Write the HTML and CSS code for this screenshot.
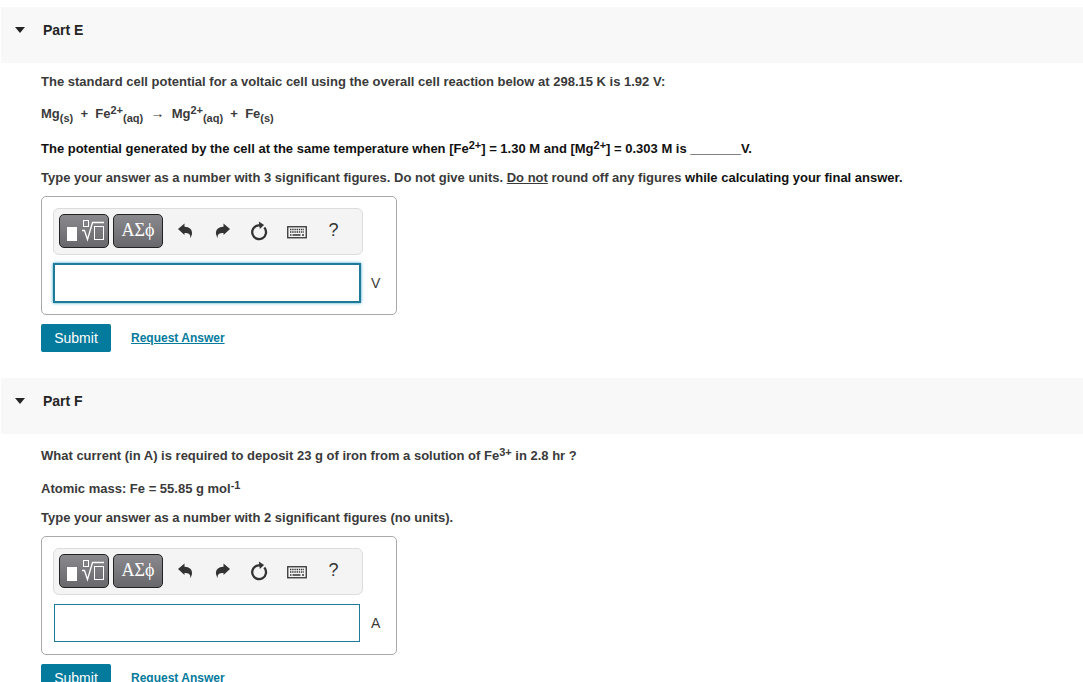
FILE: index.html
```html
<!DOCTYPE html>
<html lang="en">
  <head>
    <meta charset="UTF-8" />
    <meta name="viewport" content="width=device-width, initial-scale=1.0" />
    <title>Voltaic Cells</title>
    <link rel="stylesheet" href="styles.css">
  </head>
  <body>
    <!-- shared toolbar icons -->
    <svg class="sprite" aria-hidden="true">
      <symbol id="icon-template" viewBox="0 0 40 24">
        <rect x="3" y="8" width="10" height="14" fill="#fff" />
        <g fill="none" stroke="#fff">
          <rect x="19.500" y="1.500" width="5" height="6" />
          <path d="M18 11.500h2.500l3 9 5-17H40" stroke-width="1.300" />
          <rect x="30.500" y="7.500" width="9" height="13" />
        </g>
      </symbol>
      <symbol id="icon-undo" viewBox="0 0 16 16">
        <path d="M0 6 6.500 0.500v3.300c5 0 8 3 7.500 7.200l-1.500 4.500c.2-4.500-2-5.500-6-5.500v2z" />
      </symbol>
      <symbol id="icon-redo" viewBox="0 0 16 16">
        <path d="M15 6 8.500 0.500v3.300c-5 0-8 3-7.500 7.200l1.500 4.500c-.2-4.500 2-5.500 6-5.500v2z" />
      </symbol>
      <symbol id="icon-reset" viewBox="0 0 18 20">
        <path d="M13.300 6.600A6.900 6.900 0 1 1 7.500 4.300h2" fill="none" stroke="#333" stroke-width="2.300" />
        <path d="M7.800 0.500 13.100 4 8.800 8z" />
      </symbol>
      <symbol id="icon-keyboard" viewBox="0 0 20 13">
        <rect x="0.750" y="0.750" width="18.500" height="11" fill="none" stroke="#333" stroke-width="1.300" />
        <path d="M3 3.500h14M3 6h14" stroke="#333" stroke-width="1.500" stroke-dasharray="1.400 0.800" />
        <path d="M3 9h1.500M5.500 9h8M15 9h2" stroke="#333" stroke-width="1.500" />
      </symbol>
    </svg>

    <section class="part">
      <button type="button" class="part-header">
        <span class="caret"></span>
        Part E
      </button>
      <div class="part-body">
        <p>The standard cell potential for a voltaic cell using the overall cell reaction below at 298.15 K is 1.92 V:</p>
        <p class="has-sup has-sub">Mg<sub>(s)</sub>&nbsp; + &nbsp;Fe<sup>2+</sup><sub>(aq)</sub>&nbsp; <span class="arrow">→</span>&nbsp; Mg<sup>2+</sup><sub>(aq)</sub>&nbsp; + &nbsp;Fe<sub>(s)</sub></p>
        <p class="has-sup dark">The potential generated by the cell at the same temperature when [Fe<sup>2+</sup>] = 1.30 M and [Mg<sup>2+</sup>] = 0.303 M is _______V.</p>
        <p>Type your answer as a number with 3 significant figures. Do not give units. <u>Do not</u> round off any figures <span class="dark">while calculating your final answer.</span></p>
        <form id="formE">
          <div class="answer-box">
            <div class="toolbar">
              <button type="button" class="tool-dark" aria-label="Templates"><svg width="40" height="24"><use href="#icon-template" /></svg></button>
              <button type="button" class="tool-dark">ΑΣϕ</button>
              <button type="button" class="tool" aria-label="Undo"><svg width="16" height="16"><use href="#icon-undo" /></svg></button>
              <button type="button" class="tool" aria-label="Redo"><svg width="16" height="16"><use href="#icon-redo" /></svg></button>
              <button type="button" class="tool" aria-label="Reset"><svg width="18" height="20"><use href="#icon-reset" /></svg></button>
              <button type="button" class="tool" aria-label="Keyboard shortcuts"><svg class="keyboard" width="20" height="13"><use href="#icon-keyboard" /></svg></button>
              <button type="button" class="tool" title="Help">?</button>
            </div>
            <div class="answer-row">
              <input type="text" id="answerE" class="answer active" />
              <label for="answerE">V</label>
            </div>
          </div>
          <div class="actions">
            <button type="button" class="btn">Submit</button>
            <a href="#answerE">Request Answer</a>
          </div>
        </form>
      </div>
    </section>

    <section class="part">
      <button type="button" class="part-header">
        <span class="caret"></span>
        Part F
      </button>
      <div class="part-body">
        <p class="has-sup">What current (in A) is required to deposit 23 g of iron from a solution of Fe<sup>3+</sup> in 2.8 hr ?</p>
        <p class="has-sup">Atomic mass: Fe = 55.85 g mol<sup>-1</sup></p>
        <p>Type your answer as a number with 2 significant figures (no units).</p>
        <form id="formF">
          <div class="answer-box">
            <div class="toolbar">
              <button type="button" class="tool-dark" aria-label="Templates"><svg width="40" height="24"><use href="#icon-template" /></svg></button>
              <button type="button" class="tool-dark">ΑΣϕ</button>
              <button type="button" class="tool" aria-label="Undo"><svg width="16" height="16"><use href="#icon-undo" /></svg></button>
              <button type="button" class="tool" aria-label="Redo"><svg width="16" height="16"><use href="#icon-redo" /></svg></button>
              <button type="button" class="tool" aria-label="Reset"><svg width="18" height="20"><use href="#icon-reset" /></svg></button>
              <button type="button" class="tool" aria-label="Keyboard shortcuts"><svg class="keyboard" width="20" height="13"><use href="#icon-keyboard" /></svg></button>
              <button type="button" class="tool" title="Help">?</button>
            </div>
            <div class="answer-row">
              <input type="text" id="answerF" class="answer" />
              <label for="answerF">A</label>
            </div>
          </div>
          <div class="actions">
            <button type="button" class="btn">Submit</button>
            <a href="#answerF">Request Answer</a>
          </div>
        </form>
      </div>
    </section>
  </body>
</html>
```

FILE: styles.css
```css
* {
  margin: 0;
  padding: 0;
  box-sizing: border-box;
}
body {
  font-family: "Liberation Sans", Arial, sans-serif;
  font-size: 13px;
  line-height: 20px;
  color: #3a3a3a;
  background-color: #fff;
  padding: 7px 0 0 1px;
}
body::-webkit-scrollbar {
  display: none;
}
button,
input {
  font-family: inherit;
}
.sprite {
  display: none;
}
.part {
  margin-bottom: 26px;
}
.part-header {
  display: flex;
  align-items: center;
  gap: 18px;
  width: 100%;
  height: 56px;
  padding: 0 14px 10px;
  background-color: #f8f8f8;
  border: none;
  font-size: 14px;
  font-weight: bold;
  color: #252525;
  cursor: pointer;
}
.caret {
  border: 5px solid transparent;
  border-top: 6px solid #252525;
  border-bottom: none;
}
.part-body {
  padding: 9px 40px 0;
}
.part-body p {
  margin-bottom: 9px;
  font-weight: bold;
}
.part-body p:last-of-type {
  margin-bottom: 8px;
}
.part-body p.has-sup {
  padding-top: 3px;
}
.part-body p.has-sup + p.has-sup {
  padding-top: 4px;
}
.part-body p.has-sub {
  padding-bottom: 2px;
}
.part-body .dark {
  color: #111;
}
sup,
sub {
  font-size: 11px;
  line-height: 0;
}
sup {
  vertical-align: 4px;
}
sub {
  vertical-align: -4px;
}
.arrow {
  font-size: 14px;
  font-weight: normal;
  line-height: 0;
}
.answer-box {
  width: 356px;
  max-width: 100%;
  padding: 11px 11px 12px;
  border: 1px solid #a9a9a9;
  border-radius: 5px;
}
.toolbar {
  display: flex;
  align-items: center;
  width: 310px;
  height: 47px;
  padding: 0 5px 2px;
  background-color: #f4f4f4;
  border: 1px solid #dcdcdc;
  border-radius: 6px;
}
.tool-dark {
  display: flex;
  align-items: center;
  justify-content: center;
  width: 50px;
  height: 34px;
  margin-right: 4px;
  background: linear-gradient(#8a8a8e, #68686c);
  border: 1px solid #222;
  border-radius: 5px;
  font-family: "Liberation Serif", "Times New Roman", serif;
  font-size: 18px;
  color: #fff;
}
.tool {
  display: flex;
  align-items: center;
  justify-content: center;
  width: 37px;
  height: 34px;
  background: none;
  border: none;
  font-size: 18px;
  color: #333;
  fill: #333;
}
.keyboard {
  margin-top: 3px;
}
.answer-row {
  display: flex;
  align-items: center;
  gap: 11px;
  margin-top: 9px;
  padding-left: 1px;
  font-size: 14px;
}
.answer {
  width: 306px;
  height: 38px;
  padding: 0 8px;
  border: 1px solid #1f7a99;
  font-size: 16px;
}
.answer.active {
  box-shadow: 0 0 0 1px #1f7a99, 0 0 3px 1px #2fa5c5;
}
.actions {
  display: flex;
  align-items: center;
  gap: 20px;
  margin-top: 9px;
}
.btn {
  width: 70px;
  height: 28px;
  background-color: #047a9c;
  border: none;
  border-radius: 2px;
  font-size: 14px;
  color: #fff;
  cursor: pointer;
}
.actions a {
  font-size: 12px;
  font-weight: bold;
  color: #047a9c;
}
```
